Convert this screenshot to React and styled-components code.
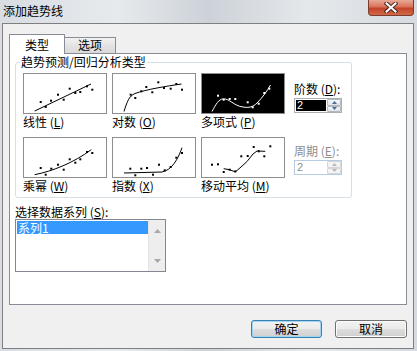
import React from 'react';
import styled, { createGlobalStyle } from 'styled-components';

const GlobalStyle = createGlobalStyle`
  html, body { margin: 0; padding: 0; }
  body {
    font-family: "Noto Sans CJK SC", "Noto Sans", sans-serif;
    font-size: 12px; color: #000;
  }
`;

// chart data, coordinates in the 84x41 thumbnail box
const charts = [
  {
    id: 'linear', label: '线性', key: 'L',
    path: 'M11.7 38 L68 11',
    dots: [[17.7,29],[22.7,34],[28,27.7],[35,21.7],[40.7,26.7],[46.7,15.7],[52.3,20],[57.3,19],[64,13.3],[69.3,16.7]],
  },
  {
    id: 'log', label: '对数', key: 'O',
    path: 'M12 38.5 C15 29 17 23 23 20.5 C34 16.5 55 13 69.5 11',
    dots: [[18.7,21.7],[23.3,25],[29.3,18.3],[34.3,14],[40.3,19.3],[46.3,9.3],[52,15],[58.7,15.7],[64.3,11],[70,16.7]],
  },
  {
    id: 'poly', label: '多项式', key: 'P', selected: true,
    path: 'M11 38.5 C15 31 18 26 22 26 C28 25 33 33 42 34 C48 35 52 34 56 30 C62 24 66 18 69.5 12',
    dots: [[17,22.7],[22.7,26.7],[28.7,26],[34.3,26],[46.7,29.3],[51.7,34.3],[57.7,30.7],[63.3,20],[68.3,15.7]],
  },
  {
    id: 'power', label: '乘幂', key: 'W',
    path: 'M11.7 37.7 C30 34 50 26 68.3 12.7',
    dots: [[17.7,31],[22.7,37.7],[28.3,31.7],[35,27.7],[40.7,32.7],[46.7,22.3],[52.3,25.7],[57.3,22.3],[64,15],[69.3,16]],
  },
  {
    id: 'exp', label: '指数', key: 'X',
    path: 'M12 36 L50 35 C60 33 66 22 70 10.7',
    dots: [[18.3,31.7],[23.3,38.3],[29.3,31.7],[35,31],[41,37.7],[47,27.7],[52.7,33.3],[58.7,30],[64.3,20.7],[70,16]],
  },
  {
    id: 'avg', label: '移动平均', key: 'M',
    path: 'M22.7 31.7 L28.7 32.7 L34.3 35 L40 30 L46 24.5 L52 17 L56 14 L64.3 14.3',
    dots: [[11,27.7],[17,27.3],[22.7,35],[28.7,32.7],[34.3,34.3],[40.3,19.3],[46.7,19],[52.7,10],[57.7,14.3],[63.3,19.3],[69.3,9.3]],
  },
];

const Chart = ({ path, dots, selected }) => {
  const ink = selected ? '#fff' : '#000';
  return (
    <svg width="82" height="39" viewBox="1 1 82 39">
      <path d={path} fill="none" stroke={ink} strokeWidth="1" />
      {dots.map(([x, y], i) => (
        <rect key={i} x={x - 1} y={y - 1} width="2" height="2" fill={ink} />
      ))}
    </svg>
  );
};

const Arrow = ({ up, color }) => (
  <svg width="7" height="4" viewBox="0 0 7 4">
    <path d={up ? 'M0 4 L3.5 0 L7 4 Z' : 'M0 0 L3.5 4 L7 0 Z'} fill={color} />
  </svg>
);

const Spin = ({ value, disabled }) => (
  <SpinBox disabled={disabled}>
    <SpinField disabled={disabled}>{value}</SpinField>
    <SpinButtons>
      <SpinBtn disabled={disabled}><Arrow up color={disabled ? '#b8b8b8' : '#4c6a94'} /></SpinBtn>
      <SpinBtn disabled={disabled}><Arrow color={disabled ? '#b8b8b8' : '#4c6a94'} /></SpinBtn>
    </SpinButtons>
  </SpinBox>
);

const App = () => {
  return (
    <Window>
      <GlobalStyle />
      <TitleBar>
        <Title>添加趋势线</Title>
        <CloseBtn>
          <svg width="14" height="11" viewBox="0 0 14 11">
            <path d="M2.5 1.5 L11.5 9.5 M11.5 1.5 L2.5 9.5" stroke="#4a2a26" strokeWidth="4" strokeLinecap="square" />
            <path d="M2.5 1.5 L11.5 9.5 M11.5 1.5 L2.5 9.5" stroke="#fff" strokeWidth="2" strokeLinecap="square" />
          </svg>
        </CloseBtn>
      </TitleBar>

      <Frame>
        <TabBar>
          <Tab active>类型</Tab>
          <Tab>选项</Tab>
        </TabBar>

        <TabPanel>
          <Group>
            <Legend>趋势预测/回归分析类型</Legend>
            <GroupBody>
              <ChartGrid>
                {charts.map((c) => (
                  <ChartCell key={c.id}>
                    <Thumb selected={c.selected}>
                      <Chart path={c.path} dots={c.dots} selected={c.selected} />
                    </Thumb>
                    <ChartLabel>{c.label} (<u>{c.key}</u>)</ChartLabel>
                  </ChartCell>
                ))}
              </ChartGrid>

              <Options>
                <OptionBlock>
                  <OptLabel>阶数 (<u>D</u>):</OptLabel>
                  <Spin value="2" />
                </OptionBlock>
                <OptionBlock second>
                  <OptLabel disabled>周期 (<u>E</u>):</OptLabel>
                  <Spin value="2" disabled />
                </OptionBlock>
              </Options>
            </GroupBody>
          </Group>

          <SeriesLabel>选择数据系列 (<u>S</u>):</SeriesLabel>
          <ListBox>
            <ListItems>
              <ListItem selected>系列1</ListItem>
            </ListItems>
            <ScrollBar>
              <Arrow up color="#a8a8a8" />
              <Arrow color="#a8a8a8" />
            </ScrollBar>
          </ListBox>
        </TabPanel>

        <ButtonRow>
          <Button primary>确定</Button>
          <Button>取消</Button>
        </ButtonRow>
      </Frame>
    </Window>
  );
};

export default App;

const Window = styled.div`
  width: 417px; height: 351px;
  box-sizing: border-box;
  padding: 0 3px 2px 2px;
  display: flex; flex-direction: column;
  background: linear-gradient(90deg, #d8dde3 0%, #e7eaed 28%, #ccd2d8 50%, #e5e8eb 74%, #d6dbe1 100%);
`;

const TitleBar = styled.div`
  height: 23px;
  display: flex; align-items: flex-start;
`;

const Title = styled.div`
  margin: 4px 0 0 1px;
  font-size: 12px; line-height: 14px;
  color: #000;
`;

const CloseBtn = styled.div`
  margin-left: auto;
  width: 46px; height: 16px;
  box-sizing: border-box;
  border: 1px solid #7d3a2e; border-top: none;
  border-radius: 0 0 4px 4px;
  background: linear-gradient(180deg, #e9a996 0%, #d9735a 45%, #c2432a 55%, #d2684a 100%);
  display: flex; justify-content: center; align-items: center;
`;

const Frame = styled.div`
  flex: 1;
  border: 1px solid #7f7f7f;
  background: #f0f0f0;
  padding: 10px 6px 10px 6px;
  display: flex; flex-direction: column;
`;

const TabBar = styled.div`
  height: 19px;
  display: flex; align-items: flex-end;
`;

const Tab = styled.div`
  box-sizing: border-box;
  width: ${props => props.active ? '56px' : '52px'};
  height: ${props => props.active ? '20px' : '16px'};
  margin-bottom: ${props => props.active ? '-1px' : '0'};
  margin-left: ${props => props.active ? '0' : '-1px'};
  border: 1px solid #898c95; border-bottom: none;
  background: ${props => props.active ? '#fff' : 'linear-gradient(180deg, #f2f2f2 0%, #e3e3e3 50%, #d9d9d9 100%)'};
  position: relative; z-index: ${props => props.active ? 2 : 1};
  display: flex; justify-content: center;
  padding-top: ${props => props.active ? '3px' : '0'};
  font-size: 12px; line-height: 14px;
`;

const TabPanel = styled.div`
  box-sizing: border-box;
  height: 252px;
  border: 1px solid #898c95;
  background: #fff;
  padding: 0 0 0 5px;
  display: flex; flex-direction: column;
`;

const Group = styled.fieldset`
  width: 337px;
  box-sizing: border-box;
  margin: 1px 0 0 0;
  padding: 4px 7px 3px 7px;
  border: 1px solid #d5dfe5;
  border-radius: 3px;
`;

const Legend = styled.legend`
  margin-left: -3px;
  padding: 0 1px;
  font-size: 12px; line-height: 14px;
`;

const GroupBody = styled.div`
  display: flex;
`;

const ChartGrid = styled.div`
  display: grid;
  grid-template-columns: repeat(3, 84px);
  column-gap: 5px; row-gap: 7px;
`;

const ChartCell = styled.div`
  display: flex; flex-direction: column;
`;

const Thumb = styled.div`
  width: 84px; height: 41px;
  box-sizing: border-box;
  border: 1px solid #8e8e8e;
  background: ${props => props.selected ? '#000' : '#fff'};
  & svg { display: block; }
`;

const ChartLabel = styled.div`
  height: 16px;
  font-size: 12px; line-height: 16px;
  white-space: nowrap;
`;

const Options = styled.div`
  margin-left: 9px;
  padding-top: 9px;
  display: flex; flex-direction: column;
`;

const OptionBlock = styled.div`
  margin-top: ${props => props.second ? '31px' : '0'};
  display: flex; flex-direction: column;
`;

const OptLabel = styled.div`
  font-size: 12px; line-height: 14px;
  color: ${props => props.disabled ? '#8d8d8d' : '#000'};
  white-space: nowrap;
  margin-bottom: 2px;
`;

const SpinBox = styled.div`
  width: 48px; height: 15px;
  box-sizing: border-box;
  border: 1px solid ${props => props.disabled ? '#b7cbe0' : '#abadb3'};
  background: #fff;
  display: flex;
`;

const SpinField = styled.div`
  flex: 1;
  margin: 1px;
  padding-left: 1px;
  background: ${props => props.disabled ? '#fff' : '#000'};
  color: ${props => props.disabled ? '#8d8d8d' : '#fff'};
  font-family: "Liberation Sans", Arial, sans-serif;
  font-size: 11px; line-height: 11px;
`;

const SpinButtons = styled.div`
  width: 14px;
  display: flex; flex-direction: column;
`;

const SpinBtn = styled.div`
  flex: 1;
  box-sizing: border-box;
  border: 1px solid ${props => props.disabled ? '#d6d6d6' : '#b3b7be'};
  border-radius: 1px;
  background: ${props => props.disabled ? '#f4f4f4' : 'linear-gradient(180deg, #f6f7f9 0%, #dfe3e8 100%)'};
  display: flex; justify-content: center; align-items: center;
  & svg { width: 5px; height: 3px; }
`;

const SeriesLabel = styled.div`
  margin-top: 7px;
  font-size: 12px; line-height: 14px;
`;

const ListBox = styled.div`
  width: 151px; height: 53px;
  box-sizing: border-box;
  border: 1px solid #828790;
  display: flex;
`;

const ListItems = styled.div`
  flex: 1;
  padding: 1px 0 0 1px;
`;

const ListItem = styled.div`
  height: 13px;
  padding-left: 1px;
  background: ${props => props.selected ? '#3399ff' : 'transparent'};
  color: ${props => props.selected ? '#fff' : '#000'};
  font-size: 12px; line-height: 13px;
`;

const ScrollBar = styled.div`
  width: 17px;
  background: #eeeeee;
  border-left: 1px solid #e4e4e4;
  display: flex; flex-direction: column; justify-content: space-between; align-items: center;
  padding: 9px 0 8px;
  box-sizing: border-box;
`;

const ButtonRow = styled.div`
  margin-top: 15px;
  display: flex; justify-content: flex-end;
  gap: 13px;
`;

const Button = styled.div`
  width: ${props => props.primary ? '71px' : '72px'};
  height: 18px;
  box-sizing: border-box;
  border: 1px solid ${props => props.primary ? '#3c7fb1' : '#707070'};
  border-radius: 3px;
  background: linear-gradient(180deg, #f2f2f2 0%, #ebebeb 48%, #dddddd 52%, #cfcfcf 100%);
  box-shadow: ${props => props.primary ? 'inset 0 0 0 1px #9ed6f4' : 'inset 0 0 0 1px #fcfcfc'};
  display: flex; justify-content: center; align-items: center;
  font-size: 12px; line-height: 14px;
`;
